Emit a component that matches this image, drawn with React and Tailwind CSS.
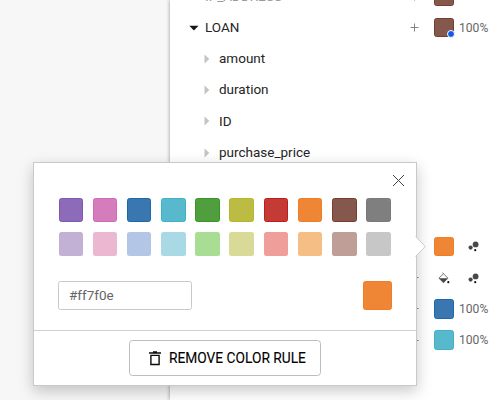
import React from "react";

const palette = [
  ["#8c6bb8", "#7f56b0"], ["#d47cbc", "#d368b6"], ["#3a76b0", "#1a69ac"], ["#58b9cc", "#3bb4c8"], ["#509e3e", "#329820"],
  ["#bcbc45", "#b8b822"], ["#c43a34", "#c21c1a"], ["#ee8636", "#f17e24"], ["#85584e", "#783d2e"], ["#7f7f7f", "#7a7a7a"],
];
const pastels = ["#c2b1d4", "#ecb8d1", "#b4c6e6", "#a9d9e4", "#a8dd93", "#dada98", "#f09e9a", "#f5be84", "#bf9e97", "#c7c7c7"];

const rows = [
  { label: "IP_ADDRESS", group: true, closed: true, color: palette[8], pct: true, faded: true },
  { label: "LOAN", group: true, color: palette[8], pct: true, dot: true },
  { label: "amount" },
  { label: "duration" },
  { label: "ID" },
  { label: "purchase_price" },
  {},
  {},
  { color: palette[7], bubbles: true },
  { fill: true, bubbles: true, plus: true },
  { color: palette[2], pct: true, plus: true },
  { color: palette[3], pct: true, plus: true },
];

function Caret({ group, closed }) {
  if (group && !closed)
    return (
      <svg className="block" width="10" height="6" viewBox="0 0 10 6"><path d="M.3.8h9.2L4.9 5.4z" fill="#161616" /></svg>
    );
  return (
    <svg className="block" width="6" height="10" viewBox="0 0 6 10"><path d="M.5.5 5.3 5 .5 9.5z" fill="#c4c4c4" /></svg>
  );
}

function Bubbles() {
  return (
    <svg width="12" height="12" viewBox="0 0 12 12" className="block">
      <circle cx="7.6" cy="4.4" r="2.9" fill="#484848" />
      <circle cx="2.6" cy="7.6" r="2.1" fill="#484848" />
      <circle cx="7.2" cy="10.2" r="1.1" fill="#151515" />
    </svg>
  );
}

function Bucket() {
  return (
    <svg width="12" height="12" viewBox="0 0 12 12" className="block">
      <path d="M4.4.6 9.9 6.2 5.5 10.7.9 6.2 5.5 1.7" fill="none" stroke="#555" strokeWidth=".8" />
      <path d="M1 6.3h8.9L5.5 10.8z" fill="#484848" />
      <circle cx="10.3" cy="10.2" r="1.1" fill="#111" />
    </svg>
  );
}

function Row({ row }) {
  return (
    <div className="flex h-[31.27px] shrink-0 items-center">
      <div className={`flex items-center ${row.group ? "w-[35px] pl-[19px]" : "w-[49px] pl-[34px]"}`}>
        {row.label && <Caret group={row.group} closed={row.closed} />}
      </div>
      <span className={`flex-1 text-[13.5px] leading-4 ${row.faded ? "text-[#999]" : "pb-[1.6px] text-[#252525]"}`}>{row.label}</span>
      <div className="flex w-[20px] shrink-0 items-center">
        {(row.group || row.plus) && (
          <svg width="9" height="9" viewBox="0 0 9 9" className="block"><path d="M4.5.5v8M.5 4.5h8" stroke="#777" strokeWidth=".9" /></svg>
        )}
      </div>
      <div className="flex w-[29px] shrink-0 pl-[4px]">
        {row.color && (
          <div className="relative size-[19.5px] shrink-0 rounded-[2.5px] border" style={{ backgroundColor: row.color[0], borderColor: row.color[1] }}>
            {row.dot && <span className="absolute -right-[2px] -bottom-[2px] size-[8px] rounded-full border-[1.5px] border-white bg-[#1259ef]" />}
          </div>
        )}
        {row.fill && <div className="pl-[4px]"><Bucket /></div>}
      </div>
      <div className="flex w-[39px] shrink-0 items-center">
        {row.pct && <span className="text-[12.1px] leading-4 text-[#666]">100%</span>}
        {row.bubbles && <div className="pl-[9px]"><Bubbles /></div>}
      </div>
    </div>
  );
}

function Picker() {
  return (
    <div className="absolute left-[33px] top-[162px] flex h-[224px] w-[384px] flex-col border border-[#c9c9c9] bg-white shadow-[0_5px_14px_rgba(0,0,0,0.22)]">
      <svg className="absolute -right-[11px] top-[72px]" width="12" height="24" viewBox="0 0 12 24">
        <path d="M0 1.5v20h1L11 11.5 1 1.5z" fill="white" />
        <path d="M.5 1.5 10.4 11.5.5 21.5" fill="none" stroke="#c9c9c9" />
      </svg>
      <div className="flex h-[34px] shrink-0 justify-end pr-[11px] pt-[11px]">
        <svg width="13" height="13" viewBox="0 0 13 13"><path d="m1 1 11 11M12 1 1 12" stroke="#444" strokeWidth="1" /></svg>
      </div>
      <div className="flex shrink-0 gap-[9.7px] pl-[24.5px] pt-[.5px]">
        {palette.map(([fill, edge]) => (
          <div key={fill} className="size-[24.5px] shrink-0 rounded-[2.5px] border" style={{ backgroundColor: fill, borderColor: edge }} />
        ))}
      </div>
      <div className="flex shrink-0 gap-[9.7px] pl-[24.5px] pt-[9.7px]">
        {pastels.map((fill) => (
          <div key={fill} className="size-[24.5px] shrink-0 rounded-[2.5px]" style={{ backgroundColor: fill }} />
        ))}
      </div>
      <div className="flex flex-1 items-start justify-between pl-[24px] pr-[24px] pt-[24.8px]">
        <div className="flex h-[29.5px] w-[134px] items-center rounded-[2.5px] border border-[#c9c9c9] pl-[10px] pb-px text-[13.5px] text-[#666]">#ff7f0e</div>
        <div className="size-[29.5px] rounded-[2.5px] border border-[#f17e24] bg-[#ee8636]" />
      </div>
      <div className="flex h-[55px] shrink-0 items-center justify-center border-t border-[#d0d0d0]">
        <div className="flex h-[36px] w-[192px] items-center rounded-[3.5px] border border-[#bdbdbd] pl-[19px] text-[13.75px] text-black [-webkit-text-stroke:0.1px_black]">
          <svg width="12" height="15" viewBox="0 0 12 15" className="mr-[8px] block shrink-0">
            <path d="M0 2h12M4 .9h4" stroke="#0b0b0b" strokeWidth="1.3" />
            <path d="M1.9 4.4h8.2v9.1H1.9z" fill="none" stroke="#0b0b0b" strokeWidth="1.4" />
          </svg>
          <span className="whitespace-nowrap">REMOVE COLOR RULE</span>
        </div>
      </div>
    </div>
  );
}

export default function App() {
  return (
    <div className="relative flex h-[400px] w-[498px] overflow-hidden bg-[#f7f7f7] font-[Roboto,sans-serif]">
      <div className="w-[170px] shrink-0" />
      <div className="flex min-w-0 flex-1 flex-col bg-white shadow-[0_0_4px_rgba(0,0,0,0.4)]">
        <div className="-mt-[19.4px] flex w-[328px] flex-col">
          {rows.map((row, i) => <Row key={i} row={row} />)}
        </div>
      </div>
      <Picker />
    </div>
  );
}
